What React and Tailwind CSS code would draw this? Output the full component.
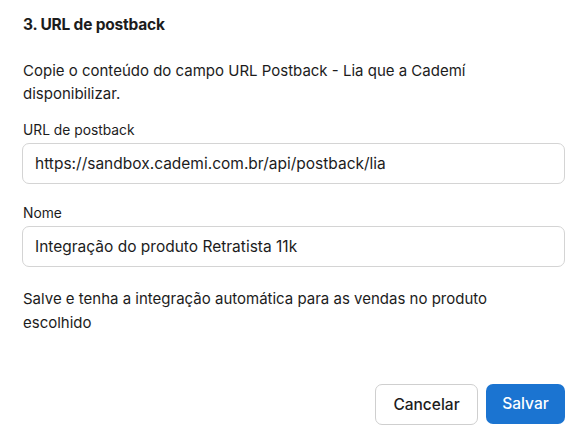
import React from "react";

function App() {
  return (
    <div
      className="w-[580px] h-[442px] bg-white text-[#1c1c1c] overflow-hidden"
      style={{ fontFamily: "Inter, 'Noto Sans', sans-serif" }}
    >
      <div className="pl-[22px] pr-[15px] pt-[14px] flex flex-col">
        {/* titulo da etapa */}
        <h2 className="text-[15.5px] leading-[22px] font-bold tracking-[-0.2px] ml-[1px]">
          3. URL de postback
        </h2>

        <p className="mt-[23px] max-w-[510px] text-[15px] leading-[23px] ml-[1px]">
          Copie o conteúdo do campo URL Postback - Lia que a Cademí
          disponibilizar.
        </p>

        <label className="mt-[16px] text-[13.8px] leading-[18px] ml-[1px]">
          URL de postback
        </label>
        <input
          readOnly
          value="https://sandbox.cademi.com.br/api/postback/lia"
          className="mt-[4px] h-[41px] w-full rounded-[7px] border border-[#d4d4d4] px-[12px] text-[15.5px] text-[#1c1c1c] outline-none"
        />

        <label className="mt-[20px] text-[13.8px] leading-[18px] ml-[1px]">
          Nome
        </label>
        <input
          readOnly
          value="Integração do produto Retratista 11k"
          className="mt-[4px] h-[41px] w-full rounded-[7px] border border-[#d4d4d4] px-[12px] text-[15.5px] text-[#1c1c1c] outline-none"
        />

        <p className="mt-[20px] max-w-[510px] text-[15px] leading-[24px] ml-[1px]">
          Salve e tenha a integração automática para as vendas no produto
          escolhido
        </p>

        {/* botoes */}
        <div className="mt-[49px] flex justify-end gap-[8px]">
          <button className="h-[41px] w-[103px] rounded-[7px] border border-[#cfcfcf] bg-white text-[15.5px] font-medium text-[#1c1c1c]">
            Cancelar
          </button>
          <button className="h-[40px] w-[79px] rounded-[7px] bg-[#1b74d1] text-[15.5px] font-medium text-white">
            Salvar
          </button>
        </div>
      </div>
    </div>
  );
}

export default App;
